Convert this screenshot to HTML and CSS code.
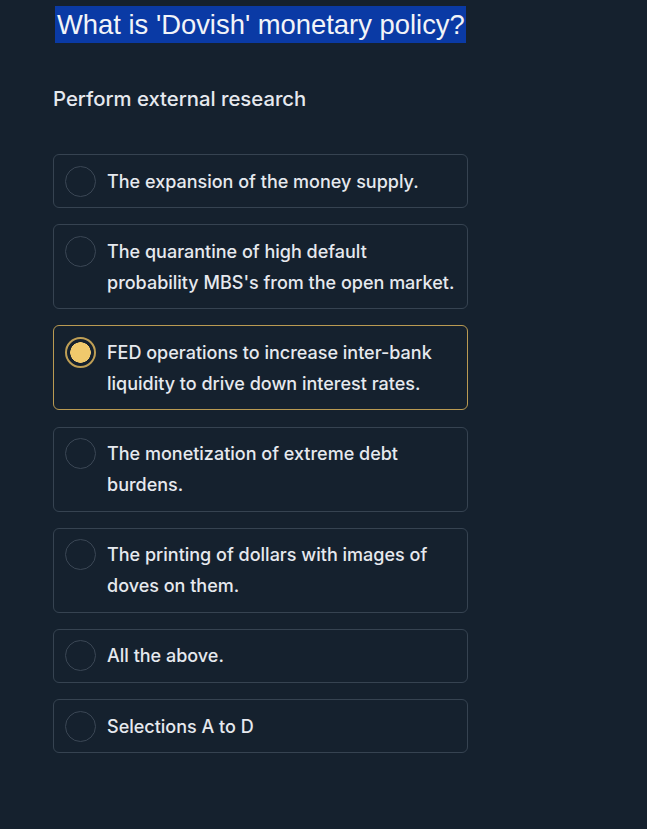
FILE: index.html
```html
<!DOCTYPE html>
<html lang="en">
  <head>
    <meta charset="UTF-8" />
    <meta name="viewport" content="width=device-width, initial-scale=1.0" />
    <title>Quiz</title>
    <link rel="stylesheet" href="styles.css">
  </head>
  <body>
    <main class="quiz">
      <h1 class="question"><span class="question-text">What is 'Dovish' monetary policy?</span></h1>
      <p class="hint">Perform external research</p>

      <ul class="options" role="radiogroup">
        <li class="option" role="radio" aria-checked="false">
          <span class="radio"></span>
          <span class="label">The expansion of the money supply.</span>
        </li>
        <li class="option" role="radio" aria-checked="false">
          <span class="radio"></span>
          <span class="label">The quarantine of high default probability MBS's from the open market.</span>
        </li>
        <li class="option selected" role="radio" aria-checked="true">
          <span class="radio"></span>
          <span class="label">FED operations to increase inter-bank liquidity to drive down interest rates.</span>
        </li>
        <li class="option" role="radio" aria-checked="false">
          <span class="radio"></span>
          <span class="label">The monetization of extreme debt burdens.</span>
        </li>
        <li class="option" role="radio" aria-checked="false">
          <span class="radio"></span>
          <span class="label">The printing of dollars with images of doves on them.</span>
        </li>
        <li class="option" role="radio" aria-checked="false">
          <span class="radio"></span>
          <span class="label">All the above.</span>
        </li>
        <li class="option" role="radio" aria-checked="false">
          <span class="radio"></span>
          <span class="label">Selections A to D</span>
        </li>
      </ul>
    </main>
  </body>
</html>
```

FILE: styles.css
```css
body {
  margin: 0;
  background: #15212e;
  color: #e6e9ee;
  font-family: Inter, "Liberation Sans", Arial, sans-serif;
}

.quiz {
  width: 415px;
  padding: 6px 0 40px 53px;
}

.question {
  margin: 0;
  font-family: "Liberation Sans", Arial, sans-serif;
  font-size: 27.4px;
  font-weight: normal;
  line-height: 37px;
}

.question-text {
  display: inline-block;
  margin-left: 2px;
  padding: 0 1px 0 2px;
  background: #0a3aa5;
  color: #f2f4f8;
}

.hint {
  margin: 43px 0 0;
  font-size: 20.3px;
  font-weight: 500;
  line-height: 26px;
}

.options {
  list-style: none;
  margin: 42px 0 0;
  padding: 0;
  display: flex;
  flex-direction: column;
  gap: 16.2px;
}

.option {
  display: flex;
  align-items: flex-start;
  gap: 11px;
  padding: 10.5px 12px 10.5px 11px;
  border: 1px solid #364351;
  border-radius: 6px;
  font-size: 18px;
  font-weight: 500;
  line-height: 31px;
  cursor: pointer;
}

.radio {
  flex: none;
  width: 31px;
  height: 31px;
  border: 1px solid #3b4755;
  border-radius: 50%;
  box-sizing: border-box;
}

.option.selected {
  border-color: #b99a52;
}

.option.selected .radio {
  border: 2px solid #bf9f55;
  background: radial-gradient(circle, #f0c96c 0 10px, #15212e 10.5px);
}
```
